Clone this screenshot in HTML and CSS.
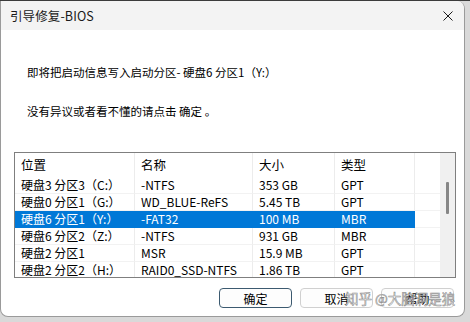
FILE: index.html
```html
<!DOCTYPE html>
<html lang="zh-CN">
<head>
<meta charset="utf-8">
<title>引导修复-BIOS</title>
<link rel="stylesheet" href="styles.css">
</head>
<body>
<div class="window">
  <div class="titlebar">
    <span class="title">引导修复-BIOS</span>
    <span class="close">
      <svg width="10" height="10" viewBox="0 0 10 10"><path d="M0.5 0.5 L9.5 9.5 M9.5 0.5 L0.5 9.5" stroke="#1a1a1a" stroke-width="1" fill="none"/></svg>
    </span>
  </div>
  <div class="content">
    <p class="msg">即将把启动信息写入启动分区- 硬盘6 分区1（Y:）</p>
    <p class="msg second">没有异议或者看不懂的请点击 确定 。</p>
    <div class="listbox">
      <div class="list">
        <div class="row header"><div class="cell">位置</div><div class="cell">名称</div><div class="cell">大小</div><div class="cell">类型</div><div class="cell rest"></div></div>
        <div class="row"><div class="cell">硬盘3 分区3（C:）</div><div class="cell">-NTFS</div><div class="cell">353 GB</div><div class="cell">GPT</div><div class="cell rest"></div></div>
        <div class="row"><div class="cell">硬盘0 分区1（G:）</div><div class="cell">WD_BLUE-ReFS</div><div class="cell">5.45 TB</div><div class="cell">GPT</div><div class="cell rest"></div></div>
        <div class="row sel"><div class="cell">硬盘6 分区1（Y:）</div><div class="cell">-FAT32</div><div class="cell">100 MB</div><div class="cell">MBR</div><div class="cell rest"></div></div>
        <div class="row"><div class="cell">硬盘6 分区2（Z:）</div><div class="cell">-NTFS</div><div class="cell">931 GB</div><div class="cell">MBR</div><div class="cell rest"></div></div>
        <div class="row"><div class="cell">硬盘2 分区1</div><div class="cell">MSR</div><div class="cell">15.9 MB</div><div class="cell">GPT</div><div class="cell rest"></div></div>
        <div class="row"><div class="cell">硬盘2 分区2（H:）</div><div class="cell">RAID0_SSD-NTFS</div><div class="cell">1.86 TB</div><div class="cell">GPT</div><div class="cell rest"></div></div>
      </div>
      <div class="scrollbar"><div class="thumb"></div></div>
    </div>
    <div class="buttons">
      <button class="btn default">确定</button>
      <button class="btn">取消</button>
      <button class="btn">帮助</button>
    </div>
  </div>
  <div class="watermark">知乎 @大脑洞是狼</div>
</div>
</body>
</html>
```
FILE: styles.css
```css
* { box-sizing: border-box; }
html, body { margin: 0; padding: 0; }
body {
  width: 470px;
  height: 322px;
  overflow: hidden;
  background: linear-gradient(#3b3b3b 0 1px, #d9d9d9 1px);
  padding-top: 1px;
  font-family: "Noto Sans CJK SC", "Noto Sans", sans-serif;
  color: #000;
}
.window {
  position: relative;
  width: 465px;
  height: 316px;
  background: #fff;
  border: 1px solid #9a9a9a;
  border-top: none;
  border-radius: 0 8px 8px 8px;
  overflow: hidden;
}
.titlebar {
  height: 29px;
  background: #f3f3f3;
  display: flex;
  align-items: center;
  justify-content: space-between;
  padding: 0 9px 0 9px;
}
.title { font-size: 12.5px; color: #1a1a1a; letter-spacing: 0.1px; }
.close { display: flex; width: 10px; height: 10px; margin-right: 2px; }
.content { padding: 34px 0 0 13px; }
.msg {
  margin: 0 0 0 13px;
  height: 16px;
  line-height: 16px;
  font-size: 11.5px;
  white-space: nowrap;
}
.msg.second { margin-top: 23px; }
.listbox {
  margin-top: 33px;
  width: 442px;
  height: 126px;
  border: 1px solid #7f7f7f;
  display: flex;
  overflow: hidden;
}
.list { width: 425px; }
.row {
  display: grid;
  grid-template-columns: 120px 118px 82px 80px 25px;
  height: 17px;
}
.row.header { height: 24px; }
.cell {
  border-right: 1px solid #ececec;
  border-bottom: 1px solid #f2f2f2;
  padding-left: 6px;
  font-size: 12px;
  line-height: 16px;
  white-space: nowrap;
  overflow: hidden;
}
.row.header .cell { line-height: 24px; font-size: 12.5px; border-bottom: none; }
.cell.rest { border-right: none; }
.row.sel .cell:not(.rest) { background: #0078d7; color: #fff; border-right-color: #0078d7; border-bottom-color: #0078d7; }
.scrollbar {
  width: 15px;
  background: #f0f0f0;
  display: flex;
  justify-content: center;
  padding-top: 29px;
}
.thumb { width: 3px; height: 32px; background: #868686; border-radius: 1px; }
.buttons {
  margin-top: 10px;
  padding-left: 205px;
  display: flex;
  gap: 8px;
}
.btn {
  width: 73px;
  height: 20px;
  border: 1px solid #d0d0d0;
  border-radius: 4px;
  background: #fdfdfd;
  font-family: "Noto Sans CJK SC", sans-serif;
  font-size: 12px;
  padding: 0;
  color: #000;
}
.btn.default { border-color: #3c5a70; }
.watermark {
  position: absolute;
  left: 344px;
  top: 287px;
  font-size: 13.5px;
  color: rgba(255,255,255,0.85);
  -webkit-text-stroke: 0.6px rgba(110,110,110,0.8);
  white-space: nowrap;
}
```
